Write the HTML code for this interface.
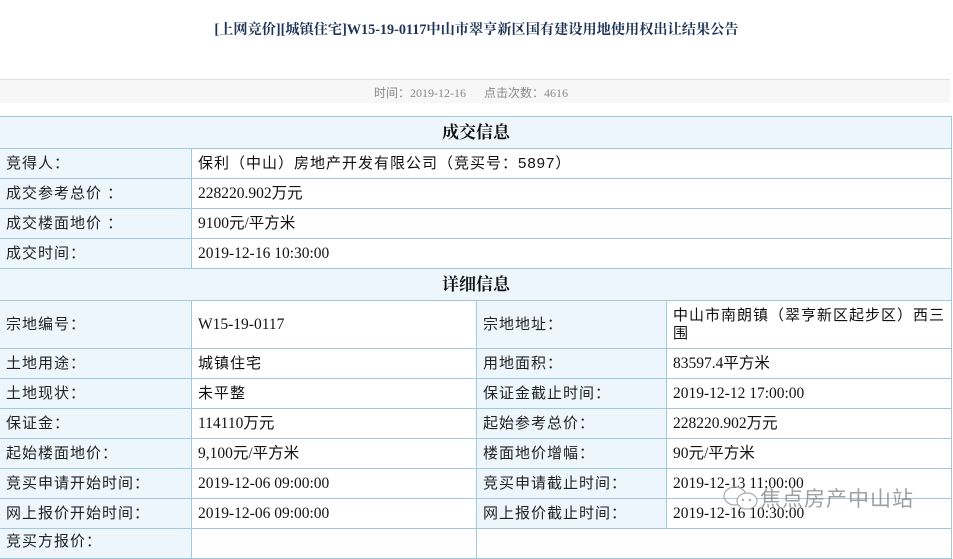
<!DOCTYPE html>
<html><head><meta charset="utf-8"><style>
*{margin:0;padding:0;box-sizing:border-box}
body{width:953px;height:538px;overflow:hidden;background:#fff;position:relative;font-family:"Liberation Serif","Noto Sans CJK SC",serif;color:#111}
.title{position:absolute;top:19px;left:0;width:953px;text-align:center;font-size:14.2px;font-weight:bold;color:#1c3257;font-family:"Liberation Serif","Noto Serif CJK SC",serif}
.bar{position:absolute;top:79px;left:0;width:950px;height:24px;background:#f7f7f7;border-top:1px solid #e0e0e0}
.meta{position:absolute;top:84px;left:374px;font-size:12px;color:#888;font-family:"Liberation Serif","Noto Sans CJK SC",serif;white-space:pre}
table{position:absolute;top:116px;left:-1px;width:952px;border-collapse:collapse;table-layout:fixed}
td{border:1px solid #a3c8d8;font-size:15px;padding:0 5px 0 6px;vertical-align:middle;line-height:18px;overflow:hidden}
td.l{background:#eef6fd;font-family:"Liberation Sans","Noto Sans CJK SC",sans-serif;color:#222;letter-spacing:1px;white-space:nowrap}
td.v{font-family:"Liberation Serif","Noto Sans CJK SC",serif;font-size:15.5px}
td.c{font-family:"Liberation Sans","Noto Sans CJK SC",sans-serif;letter-spacing:1px;font-size:15px}
td.h{background:#eef6fd;text-align:center;font-weight:bold;font-size:17px;font-family:"Liberation Serif","Noto Serif CJK SC",serif}
.wm{position:absolute;top:483px;left:760px;font-size:21px;color:rgba(120,120,120,.7);font-family:"Noto Sans CJK SC",sans-serif;letter-spacing:1px}
</style></head><body>
<div class="title">[上网竞价][城镇住宅]W15-19-0117中山市翠亨新区国有建设用地使用权出让结果公告</div>
<div class="bar"></div>
<div class="meta">时间：2019-12-16      点击次数：4616</div>
<table>
<colgroup><col style="width:192px"><col style="width:285px"><col style="width:190px"><col style="width:285px"></colgroup>
<tr style="height:32px"><td class="h" colspan="4">成交信息</td></tr>
<tr style="height:30px"><td class="l">竞得人：</td><td class="c" colspan="3">保利（中山）房地产开发有限公司（竞买号：5897）</td></tr>
<tr style="height:30px"><td class="l">成交参考总价 ：</td><td class="v" colspan="3">228220.902万元</td></tr>
<tr style="height:30px"><td class="l">成交楼面地价 ：</td><td class="v" colspan="3">9100元/平方米</td></tr>
<tr style="height:30px"><td class="l">成交时间：</td><td class="v" colspan="3">2019-12-16 10:30:00</td></tr>
<tr style="height:32px"><td class="h" colspan="4">详细信息</td></tr>
<tr style="height:48px"><td class="l">宗地编号：</td><td class="v">W15-19-0117</td><td class="l">宗地地址：</td><td class="c">中山市南朗镇（翠亨新区起步区）西三围</td></tr>
<tr style="height:30px"><td class="l">土地用途：</td><td class="c">城镇住宅</td><td class="l">用地面积：</td><td class="v">83597.4平方米</td></tr>
<tr style="height:30px"><td class="l">土地现状：</td><td class="c">未平整</td><td class="l">保证金截止时间：</td><td class="v">2019-12-12 17:00:00</td></tr>
<tr style="height:30px"><td class="l">保证金：</td><td class="v">114110万元</td><td class="l">起始参考总价：</td><td class="v">228220.902万元</td></tr>
<tr style="height:30px"><td class="l">起始楼面地价：</td><td class="v">9,100元/平方米</td><td class="l">楼面地价增幅：</td><td class="v">90元/平方米</td></tr>
<tr style="height:30px"><td class="l">竞买申请开始时间：</td><td class="v">2019-12-06 09:00:00</td><td class="l">竞买申请截止时间：</td><td class="v">2019-12-13 11:00:00</td></tr>
<tr style="height:30px"><td class="l">网上报价开始时间：</td><td class="v">2019-12-06 09:00:00</td><td class="l">网上报价截止时间：</td><td class="v">2019-12-16 10:30:00</td></tr>
<tr style="height:30px"><td class="l" style="vertical-align:top;padding-top:4px">竞买方报价：</td><td class="v"></td><td class="v" colspan="2"></td></tr>
</table>
<svg style="position:absolute;left:722px;top:485px" width="40" height="28" viewBox="0 0 40 28"><ellipse cx="13" cy="11" rx="11" ry="9" fill="none" stroke="#aaa" stroke-width="1.2"/><ellipse cx="25" cy="16" rx="10" ry="8" fill="#fff" stroke="#aaa" stroke-width="1.2"/><circle cx="21" cy="15" r="1.2" fill="#aaa"/><circle cx="28" cy="15" r="1.2" fill="#aaa"/></svg>
<div class="wm">焦点房产中山站</div>
</body></html>
